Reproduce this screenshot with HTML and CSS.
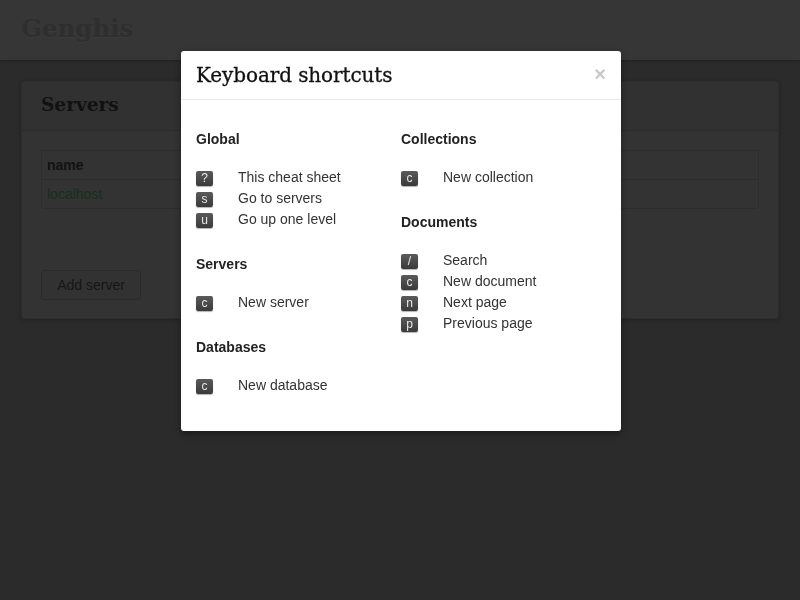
FILE: index.html
```html
<!DOCTYPE html>
<html>
<head>
<meta charset="utf-8">
<link rel="stylesheet" href="styles.css">
</head>
<body>
<header class="topbar">
  <div class="brand">Genghis</div>
</header>
<main class="page">
  <section class="card">
    <div class="card-head"><h2>Servers</h2></div>
    <div class="card-body">
      <table class="servers">
        <thead><tr><th>name</th></tr></thead>
        <tbody><tr><td><span class="link">localhost</span></td></tr></tbody>
      </table>
      <button class="btn">Add server</button>
    </div>
  </section>
</main>

<div class="modal">
  <div class="modal-head">
    <h3>Keyboard shortcuts</h3>
    <span class="close">×</span>
  </div>
  <div class="modal-body">
    <div class="col">
      <div class="group">
        <h4>Global</h4>
        <div class="row"><kbd>?</kbd><span>This cheat sheet</span></div>
        <div class="row"><kbd>s</kbd><span>Go to servers</span></div>
        <div class="row"><kbd>u</kbd><span>Go up one level</span></div>
      </div>
      <div class="group">
        <h4>Servers</h4>
        <div class="row"><kbd>c</kbd><span>New server</span></div>
      </div>
      <div class="group">
        <h4>Databases</h4>
        <div class="row"><kbd>c</kbd><span>New database</span></div>
      </div>
    </div>
    <div class="col">
      <div class="group">
        <h4>Collections</h4>
        <div class="row"><kbd>c</kbd><span>New collection</span></div>
      </div>
      <div class="group">
        <h4>Documents</h4>
        <div class="row"><kbd>/</kbd><span>Search</span></div>
        <div class="row"><kbd>c</kbd><span>New document</span></div>
        <div class="row"><kbd>n</kbd><span>Next page</span></div>
        <div class="row"><kbd>p</kbd><span>Previous page</span></div>
      </div>
    </div>
  </div>
</div>
</body>
</html>
```

FILE: styles.css
```css
html, body {
  margin: 0;
  padding: 0;
  height: 100%;
}
body {
  background: #2b2b2b;
  font-family: "Liberation Sans", Arial, sans-serif;
  font-size: 14px;
  color: #333;
}
.topbar {
  height: 60px;
  background: #363636;
  box-shadow: 0 1px 3px rgba(0,0,0,0.25);
  box-sizing: border-box;
  padding: 14px 0 0 21px;
}
.brand {
  font-family: "DejaVu Serif", serif;
  font-weight: bold;
  font-size: 24.5px;
  line-height: 30px;
  color: #2e2e2e;
  text-shadow: 0 1px 0 #3b3b3b;
}
.page {
  padding: 21px 21px 0 21px;
}
.card {
  background: #333;
  border: 1px solid #2d2d2d;
  border-radius: 3px;
  box-shadow: 0 1px 4px rgba(0,0,0,0.25);
  height: 238px;
  box-sizing: border-box;
}
.card-head {
  height: 49px;
  border-bottom: 1px solid #2b2b2b;
  background: #313131;
  padding: 0 19px;
  box-sizing: border-box;
}
.card-head h2 {
  margin: 0;
  font-family: "DejaVu Serif", serif;
  font-weight: bold;
  font-size: 18.5px;
  line-height: 46px;
  color: #111;
}
.card-body {
  padding: 19px 19px 0 19px;
}
.servers {
  width: 100%;
  border-collapse: separate;
  border-spacing: 0;
  border: 1px solid #2d2d2d;
  border-radius: 3px;
}
.servers th {
  text-align: left;
  font-weight: bold;
  color: #121212;
  height: 28px;
  padding: 0 5px;
  border-bottom: 1px solid #2d2d2d;
}
.servers td {
  height: 28px;
  padding: 0 5px;
}
.link {
  color: #163018;
}
.btn {
  margin-top: 61px;
  width: 100px;
  height: 30px;
  background: #323232;
  border: 1px solid #2a2a2a;
  border-radius: 3px;
  font-family: "Liberation Sans", Arial, sans-serif;
  font-size: 14px;
  color: #161616;
  padding: 0;
}

.modal {
  position: fixed;
  left: 181px;
  top: 51px;
  width: 440px;
  background: #fff;
  border-radius: 3px;
  box-shadow: 0 3px 7px rgba(0,0,0,0.4);
}
.modal-head {
  height: 48px;
  border-bottom: 1px solid #e8e8e8;
  display: flex;
  align-items: center;
  justify-content: space-between;
  padding: 0 15px;
}
.modal-head h3 {
  margin: 0;
  font-family: "DejaVu Serif", serif;
  font-weight: normal;
  font-size: 20px;
  color: #111;
  letter-spacing: -0.1px;
  -webkit-text-stroke: 0.3px #111;
}
.close {
  font-size: 20px;
  font-weight: bold;
  color: #c8c8c8;
  line-height: 20px;
  margin-top: -2px;
}
.modal-body {
  display: flex;
  padding: 29px 15px 36px 15px;
}
.col {
  width: 205px;
  display: flex;
  flex-direction: column;
  gap: 25px;
}
.group h4 {
  margin: 0 0 17px 0;
  font-size: 14px;
  line-height: 20px;
  font-weight: bold;
  color: #222;
}
.row {
  display: flex;
  align-items: center;
  height: 21px;
  color: #333;
}
kbd {
  display: inline-block;
  width: 17px;
  height: 15px;
  margin-top: 3px;
  box-sizing: border-box;
  background: linear-gradient(#5a5a5a, #3a3a3a);
  border-radius: 2px;
  box-shadow: 0 1px 1px rgba(0,0,0,0.3);
  color: #e8e8e8;
  font-family: "Liberation Sans", Arial, sans-serif;
  font-size: 12px;
  line-height: 15px;
  text-align: center;
  margin-right: 25px;
}
```
